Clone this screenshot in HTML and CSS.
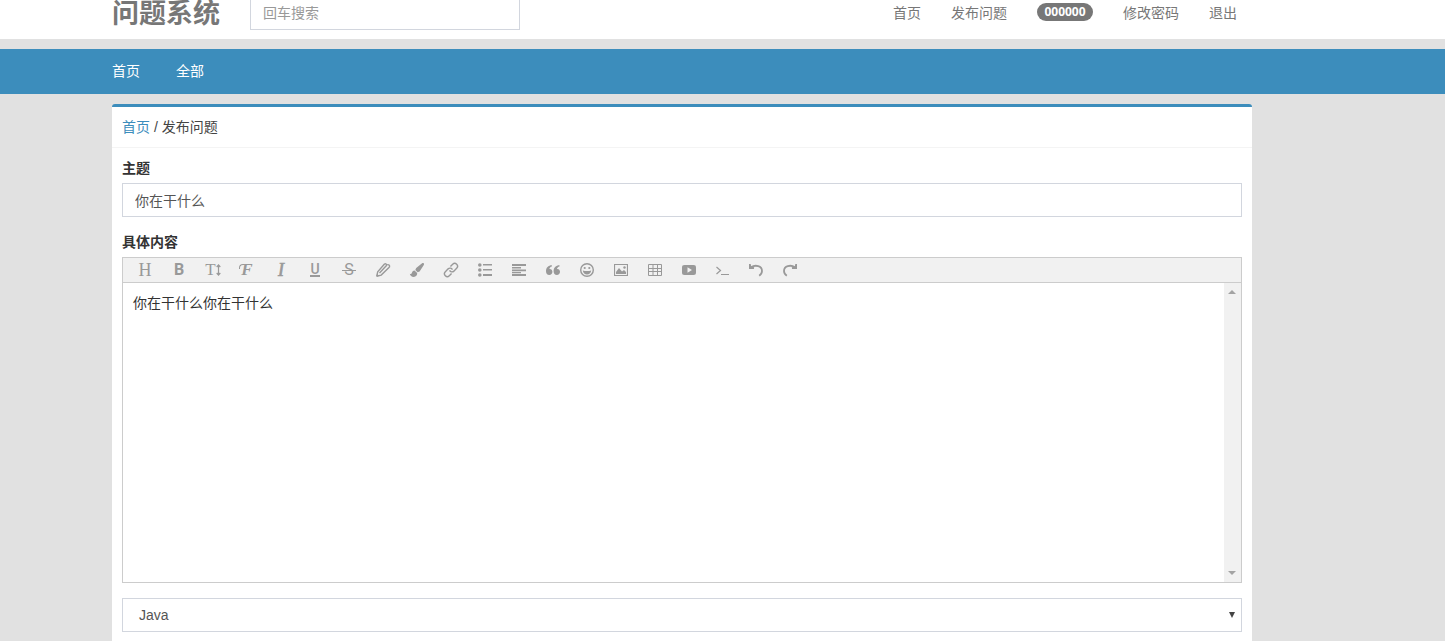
FILE: index.html
```html
<!DOCTYPE html>
<html lang="zh-CN">
<head>
  <meta charset="UTF-8">
  <title>发布问题</title>
  <link rel="stylesheet" href="styles.css">
</head>
<body>
  <header class="header">
    <div class="container header-inner">
      <a class="brand">问题系统</a>
      <input class="form-control search" type="text" placeholder="回车搜索">
      <nav class="top-menu">
        <a>首页</a>
        <a>发布问题</a>
        <a><span class="badge">000000</span></a>
        <a>修改密码</a>
        <a>退出</a>
      </nav>
    </div>
  </header>

  <nav class="navbar">
    <div class="container navbar-inner">
      <a>首页</a>
      <a>全部</a>
    </div>
  </nav>

  <main class="container">
    <div class="box">
      <div class="box-header"><a>首页</a> / 发布问题</div>
      <form class="box-body">
        <label class="title-label" for="title">主题</label>
        <input class="form-control" id="title" type="text" value="你在干什么">
        <label class="content-label">具体内容</label>

        <div class="editor">
          <div class="toolbar">
            <span class="tool tool-h">H</span>
            <span class="tool tool-b">B</span>
            <span class="tool tool-t">T<svg width="5" height="14" viewBox="0 0 5 14"><path d="M2.5 2v10M.7 4l1.8-2 1.8 2M.7 10l1.8 2 1.8-2" fill="none" stroke="currentColor" stroke-width="1.2"/></svg></span>
            <span class="tool tool-f">F</span>
            <span class="tool tool-i">I</span>
            <span class="tool tool-u">U</span>
            <span class="tool tool-s">S</span>
            <span class="tool"><svg width="16" height="16" viewBox="0 0 16 16"><path d="M1.7 14.3l1-4.5L9.5 2M1.7 14.3l4.5-1.2L14.5 5M4.500 11L11.500 3.500M9.500 2c1.300-.6 2.300.3 2 1.500M12.300 2.800c1.200-.6 2.700.7 2.200 2.200" fill="none" stroke="currentColor" stroke-width="1.400"/><path d="M1.400 14.600l.7-2.800 2.100 2.100z" fill="currentColor"/></svg></span>
            <span class="tool"><svg width="16" height="16" viewBox="0 0 16 16"><path d="M14.600 1.200c.6.4.6 1 .2 1.700L10.600 9.400 8.600 10.300 6.300 8l.9-1.900 5.600-4.700c.6-.5 1.300-.6 1.800-.2zM5.500 8.400l2.700 2.700c.2 2-1.300 3.800-3.400 3.800-2.300 0-3.600-1.200-4-3.200.9.600 1.700.4 2-.6.300-1.500 1.300-2.600 2.700-2.700z" fill="currentColor"/></svg></span>
            <span class="tool"><svg width="16" height="16" viewBox="0 0 16 16"><g transform="rotate(-45 8 8)" fill="none" stroke="currentColor" stroke-width="1.400"><path d="M6 10.800H2.800a2.800 2.800 0 0 1 0-5.600h4a2.700 2.700 0 0 1 2.500 3.500"/><path d="M10 5.200h3.200a2.800 2.800 0 0 1 0 5.600h-4a2.700 2.700 0 0 1-2.500-3.500"/></g></svg></span>
            <span class="tool"><svg width="14" height="14" viewBox="0 0 14 14" fill="currentColor"><circle cx="1.800" cy="2" r="1.800"/><circle cx="1.800" cy="7" r="1.800"/><circle cx="1.800" cy="12" r="1.800"/><path d="M5 1h9v1.500H5zM5 6h9v1.500H5zM5 11h9v2H5z"/></svg></span>
            <span class="tool"><svg width="14" height="14" viewBox="0 0 14 14"><path d="M0 1h14v2H0zM0 4h9v1.500H0zM0 6.500h14v1.700H0zM0 9h9v1.200H0zM0 11h14v2H0z" fill="currentColor"/></svg></span>
            <span class="tool"><svg width="14" height="14" viewBox="0 0 14 14" fill="currentColor"><path id="quote" d="M5.900 2.200v1.200C4.400 3.700 3.500 4.600 3.400 6c1.800-.2 3 1 3 2.800 0 1.900-1.300 3.200-3.100 3.200C1.200 12 0 10.500 0 8.200c0-3.500 2.200-6 5.900-6z"/><use href="#quote" x="7.600"/></svg></span>
            <span class="tool"><svg width="14" height="14" viewBox="0 0 14 14"><circle cx="7" cy="7" r="6.300" fill="none" stroke="currentColor" stroke-width="1.400"/><circle cx="4.700" cy="5" r="1.100" fill="currentColor"/><circle cx="9.300" cy="5" r="1.100" fill="currentColor"/><path d="M2.800 7.400c2.500.9 5.900.9 8.400 0-.4 2.500-2 4-4.200 4s-3.800-1.500-4.200-4z" fill="currentColor"/></svg></span>
            <span class="tool"><svg width="14" height="14" viewBox="0 0 14 14"><path d="M.5 1.500h13v11H.5z" fill="none" stroke="currentColor" stroke-width="1.200"/><path d="M2 11V9l3-4 3 3.500L10 7l2 2v2z" fill="currentColor"/><circle cx="10.500" cy="4.500" r="1.200" fill="currentColor"/></svg></span>
            <span class="tool"><svg width="14" height="14" viewBox="0 0 14 14"><path d="M.5 1.500h13v11H.5zM0 5.500h14M0 8.500h14M5 1v12M9.500 1v12" fill="none" stroke="currentColor"/></svg></span>
            <span class="tool"><svg width="14" height="14" viewBox="0 0 14 14"><path d="M2.500 2h9C13.300 2 14 2.800 14 4.500v5c0 1.700-.7 2.500-2.500 2.500h-9C.7 12 0 11.200 0 9.500v-5C0 2.800.7 2 2.500 2zM5.500 4.300v5.400L10 7z" fill="currentColor" fill-rule="evenodd"/></svg></span>
            <span class="tool"><svg width="14" height="14" viewBox="0 0 14 14"><path d="M.5 4l4 3.500-4 3.500M5 11.500h8" fill="none" stroke="currentColor" stroke-width="1.200"/></svg></span>
            <span class="tool"><svg class="undo" width="14" height="14" viewBox="0 0 14 14"><path id="curve" d="M2 4.300C6.500 1.300 13 3 13 8c0 1.900-1.200 3.700-2.800 4.800" fill="none" stroke="currentColor" stroke-width="1.800"/><path id="tip" d="M0 1h1.700l.5 2.500 3 .8-.3 1.700H0z" fill="currentColor"/></svg></span>
            <span class="tool"><svg class="redo" width="14" height="14" viewBox="0 0 14 14"><use href="#curve"/><use href="#tip"/></svg></span>
          </div>
          <div class="edit-area">
            <div class="edit-text">你在干什么你在干什么</div>
            <div class="scrollbar"><i class="arrow-up"></i><i class="arrow-down"></i></div>
          </div>
        </div>

        <div class="form-control select"><span>Java</span><i class="caret"></i></div>
      </form>
    </div>
  </main>
</body>
</html>
```

FILE: styles.css
```css
* {
  box-sizing: border-box;
}

body {
  margin: 0;
  height: 641px;
  overflow: hidden;
  background: #e1e1e1;
  color: #333;
  font: 14px/20px "Liberation Sans", "Noto Sans CJK SC", sans-serif;
}

.container {
  width: 1140px;
  margin-left: 112px;
}

.header {
  height: 39px;
  background: #fff;
}

.header-inner {
  display: flex;
  align-items: flex-start;
}

.brand {
  width: 138px;
  font-size: 27px;
  line-height: 28px;
  font-weight: bold;
  color: #777;
}

.form-control {
  display: block;
  width: 100%;
  height: 34px;
  padding: 6px 12px;
  border: 1px solid #d2d6de;
  background: #fff;
  color: #555;
  font: inherit;
  outline: none;
}

.form-control::placeholder {
  color: #999;
}

.search {
  width: 270px;
  margin-top: -4px;
}

.top-menu {
  display: flex;
  gap: 30px;
  margin-left: auto;
  margin-right: 15px;
  padding-top: 3px;
  color: #777;
}

.badge {
  display: block;
  width: 56px;
  height: 18px;
  border-radius: 10px;
  background: #777;
  color: #fff;
  font: bold 12px/18px "Noto Sans", sans-serif;
  text-align: center;
}

.navbar {
  height: 45px;
  margin: 10px 0;
  background: #3c8dbc;
  color: #fff;
}

.navbar-inner {
  display: flex;
  gap: 36px;
  padding-top: 12px;
}

.box {
  height: 560px;
  border-top: 3px solid #3c8dbc;
  border-radius: 3px;
  background: #fff;
}

.box-header {
  height: 41px;
  padding: 10px;
  border-bottom: 1px solid #f4f4f4;
  color: #444;
}

.box-header a {
  color: #3c8dbc;
}

.box-body {
  padding: 10px;
}

label {
  display: block;
  height: 25px;
  font-weight: bold;
}

.content-label {
  margin-top: 15px;
}

.editor {
  height: 326px;
  margin-bottom: 15px;
  border: 1px solid #ccc;
}

.toolbar {
  display: flex;
  height: 25px;
  padding: 0 5px;
  border-bottom: 1px solid #ccc;
  background: #f1f1f1;
}

.tool {
  display: flex;
  align-items: center;
  justify-content: center;
  width: 34px;
  height: 24px;
  color: #999;
  font-size: 16px;
}

.tool-h,
.tool-t,
.tool-f,
.tool-i {
  font-family: "Liberation Serif", serif;
  font-size: 18px;
}

.tool-t {
  font-size: 17px;
}

.tool-b {
  font-weight: bold;
  font-family: Roboto, sans-serif;
}

.tool-f,
.tool-i {
  font-style: italic;
}

.tool-f {
  font-weight: bold;
  font-size: 17px;
}

/* swash on the left of the top bar */
.tool-f::before {
  content: "";
  width: 4px;
  height: 4px;
  margin: -7px -3px 0 -2px;
  border: solid #999;
  border-width: 1.5px 0 0 1.5px;
  border-radius: 4px 0 0 0;
}

.tool-i {
  -webkit-text-stroke: 0.7px #999;
}

.tool-u,
.tool-s {
  font-family: Roboto, sans-serif;
  position: relative;
}

.tool-u {
  padding-bottom: 2px;
  font-size: 14px;
  font-weight: 500;
}

.tool-s {
  font-size: 16px;
}

.tool-u::after,
.tool-s::after {
  content: "";
  position: absolute;
  background: #999;
}

.tool-u::after {
  left: 12px;
  top: 17px;
  width: 10px;
  height: 2px;
}

.tool-s::after {
  left: 10px;
  top: 12px;
  width: 14px;
  height: 1px;
}

.undo {
  margin-right: 2px;
}

.redo {
  margin-right: 2px;
  transform: scaleX(-1);
}

.edit-area {
  display: flex;
  height: 299px;
}

.edit-text {
  flex: 1;
  padding: 10px;
}

.scrollbar {
  display: flex;
  flex-direction: column;
  justify-content: space-between;
  width: 17px;
  padding: 7px 4px;
  background: #f1f1f1;
}

.arrow-up,
.arrow-down {
  width: 8px;
  border: 4px solid transparent;
}

.arrow-up {
  border-top: 0;
  border-bottom-color: #a3a3a3;
}

.arrow-down {
  border-bottom: 0;
  border-top-color: #a3a3a3;
}

.select {
  display: flex;
  align-items: center;
  justify-content: space-between;
  padding: 0 6px 0 16px;
}

.caret {
  border: 3px solid transparent;
  border-top: 6px solid #444;
  border-bottom: 0;
}
```
